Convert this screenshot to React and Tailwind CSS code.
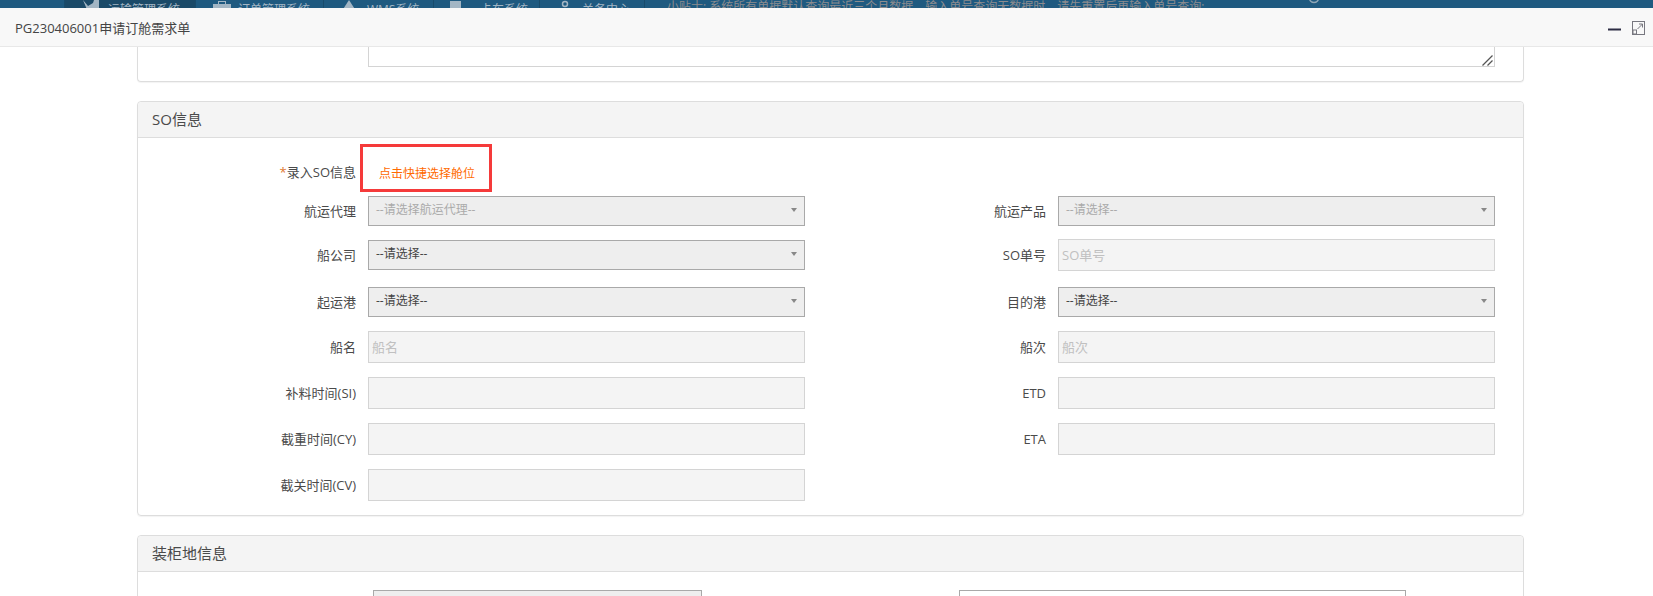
const font = { fontFamily: '"Open Sans","Noto Sans CJK SC",sans-serif' };

function NavItem({ width, active, icon, iconLeft, textLeft, text }) {
  return (
    <div
      style={{ width }}
      className={`shrink-0 h-[20px] flex border-r border-[#194c6c] ${active ? "bg-[#1b4a68]" : ""}`}
    >
      <span style={{ marginLeft: iconLeft }} className="block w-[18px] shrink-0">{icon}</span>
      <span style={{ marginLeft: textLeft }} className="text-xs leading-[20px] text-[#a3b6c4] whitespace-nowrap">{text}</span>
    </div>
  );
}

function Label({ width, children }) {
  return (
    <div style={{ width }} className="shrink-0 text-right text-[13px] text-[#4a4a4a] leading-[20px] whitespace-nowrap">
      {children}
    </div>
  );
}

function Select({ value, muted }) {
  return (
    <div className="w-[437px] h-[30px] shrink-0 bg-[#eeeeee] border border-[#a9a9a9] flex items-center justify-between pl-[7px] pr-[7px] pb-[2px]">
      <span className={`text-xs whitespace-nowrap ${muted ? "text-[#aaaaaa]" : "text-[#444]"}`}>{value}</span>
      <svg width="6" height="4" viewBox="0 0 6 4"><path d="M0 0h6L3 4z" fill="#888" /></svg>
    </div>
  );
}

function Input({ placeholder }) {
  return (
    <input
      disabled
      placeholder={placeholder}
      style={font}
      className="w-[437px] h-[32px] shrink-0 bg-[#f4f4f4] border border-[#d4d4d4] pl-[3px] pb-[1px] text-[13px] outline-none placeholder:text-[#c0c0c0]"
    />
  );
}

function Row({ top, left, leftLabel, right, rightLabel }) {
  return (
    <div style={{ marginTop: top }} className="flex items-center">
      <Label width={218}>{leftLabel}</Label>
      <div className="ml-[12px]">{left}</div>
      {rightLabel && <Label width={241}>{rightLabel}</Label>}
      {right && <div className="ml-[12px]">{right}</div>}
    </div>
  );
}

function PanelHeader({ children }) {
  return (
    <div className="h-[36px] bg-[#f4f4f4] border-b border-[#dddddd] pl-[14px] flex items-center text-[15px] text-[#4a4a4a] rounded-t-[4px]">
      {children}
    </div>
  );
}

export default function App() {
  return (
    <div style={font} className="w-[1653px] h-[596px] overflow-hidden bg-white flex flex-col">
      <div className="h-[8px] shrink-0 overflow-hidden bg-[#1f5a80] flex">
        <div className="w-[65px] shrink-0 h-[20px] border-r border-[#194c6c]" />
        <NavItem
          width={131}
          active
          iconLeft={17}
          textLeft={8}
          text="运输管理系统"
          icon={<svg width="18" height="20" viewBox="0 0 18 20"><path d="M1 0l5 6 5-3 1-3h5v12H6z" fill="#a3b6c4" /></svg>}
        />
        <NavItem
          width={128}
          iconLeft={17}
          textLeft={7}
          text="订单管理系统"
          icon={<svg width="18" height="20" viewBox="0 0 18 20"><path d="M0 4h5V1h8v3h5v16H0z" fill="#a3b6c4" /><path d="M6 2h6v2H6z" fill="#1f5a80" /></svg>}
        />
        <NavItem
          width={110}
          iconLeft={16}
          textLeft={9}
          text="WMS系统"
          icon={<svg width="18" height="20" viewBox="0 0 18 20"><path d="M9 0l9 14H0z" fill="#a3b6c4" /></svg>}
        />
        <NavItem
          width={106}
          iconLeft={16}
          textLeft={12}
          text="卡车系统"
          icon={<svg width="18" height="20" viewBox="0 0 18 20"><path d="M0 1h11v7h7v12H0z" fill="#a3b6c4" /></svg>}
        />
        <NavItem
          width={105}
          iconLeft={19}
          textLeft={5}
          text="关务中心"
          icon={<svg width="12" height="20" viewBox="0 0 12 20"><circle cx="6" cy="4" r="2.5" fill="none" stroke="#a3b6c4" strokeWidth="1.5" /></svg>}
        />
        <span className="ml-[22px] text-xs leading-[13px] text-[#8c8c8f] whitespace-nowrap">
          小贴士: 系统所有单据默认查询最近三个月数据，输入单号查询无数据时，请先重置后再输入单号查询;
        </span>
        <svg className="ml-[104px] shrink-0" width="12" height="8" viewBox="0 0 12 8">
          <circle cx="6" cy="-2" r="4.5" fill="none" stroke="#8fa6b6" strokeWidth="1.5" />
        </svg>
      </div>

      <div className="h-[39px] shrink-0 bg-[#f8f8f8] border-b border-[#e8e8e8] pl-[15px] pr-[8px] flex items-center justify-between">
        <span className="text-[13px] text-[#444] pt-[3px]">PG230406001申请订舱需求单</span>
        <div className="flex items-center gap-[11px] mt-[2px]">
          <svg width="13" height="13" viewBox="0 0 13 13"><path d="M0 7.5h13" stroke="#2d2d44" strokeWidth="2" /></svg>
          <svg width="13" height="14" viewBox="0 0 13 14">
            <rect x="0.5" y="0.5" width="12" height="13" fill="none" stroke="#77777f" />
            <rect x="1" y="9" width="3.5" height="4" fill="none" stroke="#77777f" />
            <path d="M5.5 8L10.5 3M7 3h3.5v3.5" fill="none" stroke="#77777f" />
          </svg>
        </div>
      </div>

      <div className="flex-1 overflow-hidden pl-[137px]">
        <div className="w-[1387px] h-[35px] border-x border-b border-[#dddddd] rounded-b-[4px] shadow-[0_1px_1px_rgba(0,0,0,0.05)] pl-[230px]">
          <div className="relative w-[1127px] h-[20px]">
            <textarea
              disabled
              className="block w-full h-full bg-white border border-t-0 border-[#d4d4d4] outline-none resize-none"
            />
            <svg className="absolute right-[2px] bottom-[1px]" width="11" height="11" viewBox="0 0 11 11">
              <path d="M0.5 10.5L10.5 0.5M5.5 10.5L10.5 5.5" stroke="#555" strokeWidth="1.3" />
            </svg>
          </div>
        </div>

        <div className="w-[1387px] h-[415px] mt-[19px] border border-[#dddddd] rounded-[4px] shadow-[0_1px_1px_rgba(0,0,0,0.05)]">
          <PanelHeader>SO信息</PanelHeader>
          <div className="flex items-center mt-[6px]">
            <div className="pt-[8px]">
              <Label width={218}>
                <span className="text-[#e0782f]">*</span>录入SO信息
              </Label>
            </div>
            <div className="ml-[4px] w-[132px] h-[48px] border-[3px] border-[#f53a3a] pt-[18px] pl-[16px] text-xs leading-[18px] text-[#ff6a00] whitespace-nowrap">
              点击快捷选择舱位
            </div>
          </div>
          <Row top={4} leftLabel="航运代理" left={<Select value="--请选择航运代理--" muted />} rightLabel="航运产品" right={<Select value="--请选择--" muted />} />
          <Row top={14} leftLabel="船公司" left={<Select value="--请选择--" />} rightLabel="SO单号" right={<div className="-my-[1px]"><Input placeholder="SO单号" /></div>} />
          <Row top={17} leftLabel="起运港" left={<Select value="--请选择--" />} rightLabel="目的港" right={<Select value="--请选择--" />} />
          <Row top={14} leftLabel="船名" left={<Input placeholder="船名" />} rightLabel="船次" right={<Input placeholder="船次" />} />
          <Row top={14} leftLabel="补料时间(SI)" left={<Input />} rightLabel="ETD" right={<Input />} />
          <Row top={14} leftLabel="截重时间(CY)" left={<Input />} rightLabel="ETA" right={<Input />} />
          <Row top={14} leftLabel="截关时间(CV)" left={<Input />} />
        </div>

        <div className="w-[1387px] h-[100px] mt-[19px] border border-[#dddddd] rounded-[4px]">
          <PanelHeader>装柜地信息</PanelHeader>
          <div className="flex mt-[18px]">
            <div className="ml-[235px] w-[329px] h-[30px] bg-[#eeeeee] border border-[#a9a9a9]" />
            <div className="ml-[257px] w-[447px] h-[30px] bg-white border border-[#a9a9a9]" />
          </div>
        </div>
      </div>
    </div>
  );
}
